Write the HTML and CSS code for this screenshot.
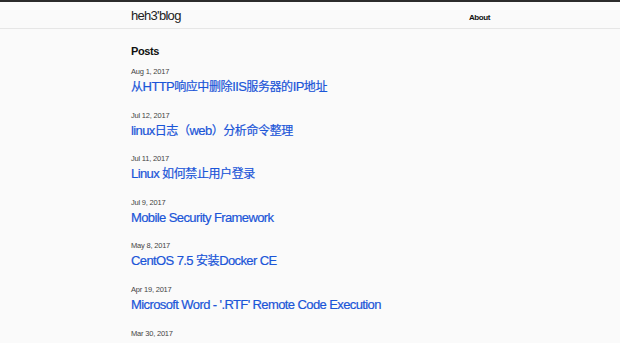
FILE: index.html
```html
<!DOCTYPE html>
<html lang="en">
<head>
  <meta charset="UTF-8" />
  <meta name="viewport" content="width=device-width, initial-scale=1.0"/>
  <title>heh3'blog</title>
  <link rel="stylesheet" href="styles.css">
</head>
<body>

<header class="site-header">
  <div class="wrapper header-row">
    <a class="site-title" href="#">heh3'blog</a>
    <nav class="site-nav">
      <a class="page-link" href="#">About</a>
    </nav>
  </div>
</header>

<main class="wrapper page-content">
  <h2 class="post-list-heading">Posts</h2>
  <ul class="post-list">
    <li>
      <span class="post-meta">Aug 1, 2017</span>
      <a class="post-link" href="#"><span class="cjk">从</span>HTTP<span class="cjk">响应中删除</span>IIS<span class="cjk">服务器的</span>IP<span class="cjk">地址</span></a>
    </li>
    <li>
      <span class="post-meta">Jul 12, 2017</span>
      <a class="post-link" href="#">linux<span class="cjk">日志（</span>web<span class="cjk">）分析命令整理</span></a>
    </li>
    <li>
      <span class="post-meta">Jul 11, 2017</span>
      <a class="post-link" href="#">Linux <span class="cjk">如何禁止用户登录</span></a>
    </li>
    <li>
      <span class="post-meta">Jul 9, 2017</span>
      <a class="post-link" href="#">Mobile Security Framework</a>
    </li>
    <li>
      <span class="post-meta">May 8, 2017</span>
      <a class="post-link" href="#">CentOS 7.5 <span class="cjk">安装</span>Docker CE</a>
    </li>
    <li>
      <span class="post-meta">Apr 19, 2017</span>
      <a class="post-link" href="#">Microsoft Word - '.RTF' Remote Code Execution</a>
    </li>
    <li>
      <span class="post-meta">Mar 30, 2017</span>
    </li>
  </ul>
</main>

</body>
</html>
```

FILE: styles.css
```css
* {
  box-sizing: border-box;
}

body {
  margin: 0;
  padding: 0;
  background: #fafafa;
  color: #111;
  font-family: "Liberation Sans", "Noto Sans CJK SC", sans-serif;
  overflow: hidden;
}

a {
  text-decoration: none;
}

.wrapper {
  width: 360px;
  margin: 0 auto;
  padding-left: 1px;
}

.site-header {
  border-top: 2px solid #2b2b2b;
  border-bottom: 1px solid #e6e6e6;
  height: 29px;
}

.header-row {
  display: flex;
  justify-content: space-between;
  align-items: center;
  height: 26px;
}

.site-title {
  color: #222;
  font-size: 13px;
  letter-spacing: -0.7px;
}

.page-link {
  color: #111;
  font-size: 8px;
  font-weight: bold;
  letter-spacing: -0.4px;
}

.page-content {
  padding-top: 16px;
}

.post-list-heading {
  font-size: 11px;
  margin: 0 0 9px;
  letter-spacing: -0.4px;
}

.post-list {
  list-style: none;
  margin: 0;
  padding: 0;
}

.post-list li {
  display: flex;
  flex-direction: column;
  height: 43.6px;
}

.post-meta {
  color: #444;
  font-size: 7.5px;
  line-height: 12px;
  letter-spacing: -0.2px;
}

.post-link {
  color: #1a55d8;
  font-size: 13px;
  line-height: 18px;
  letter-spacing: -0.6px;
  -webkit-text-stroke: 0.2px #1a55d8;
}

.post-link .cjk {
  font-size: 12px;
  letter-spacing: -0.4px;
}
```
